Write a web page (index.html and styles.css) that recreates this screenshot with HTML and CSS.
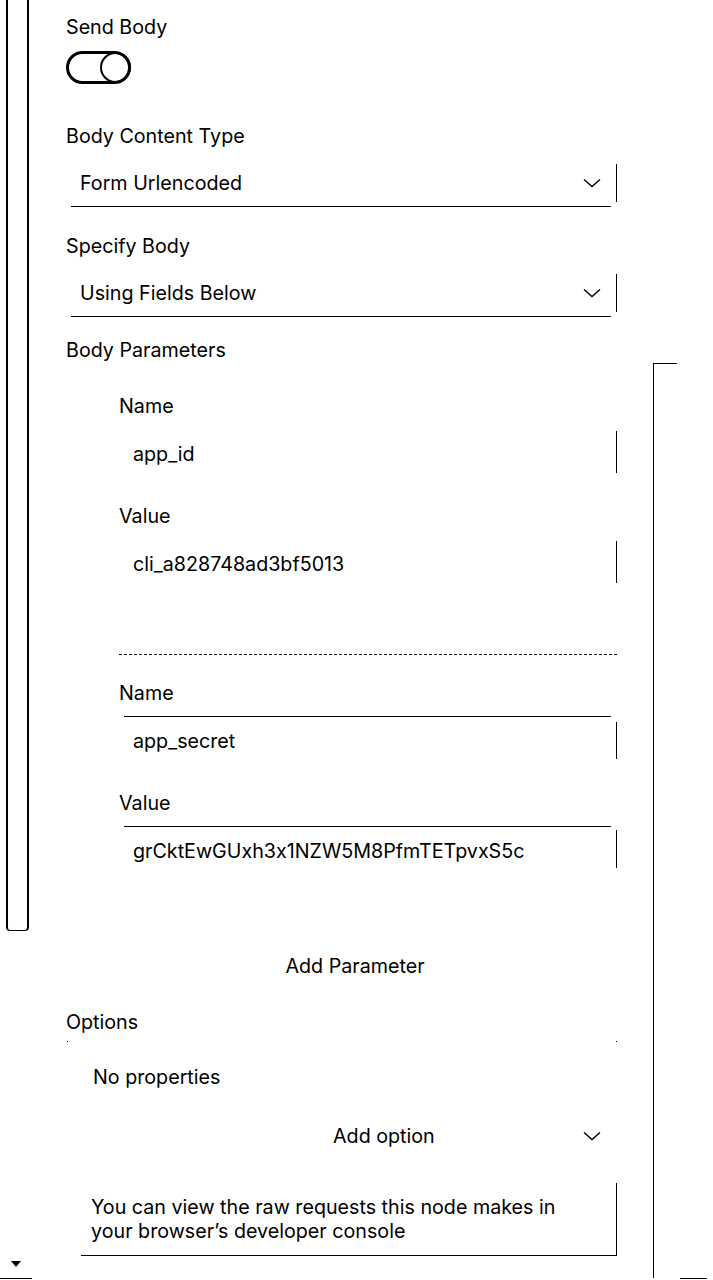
FILE: index.html
```html
<!DOCTYPE html>
<html lang="en">
<head>
<meta charset="utf-8">
<title>HTTP Request</title>
<link rel="stylesheet" href="styles.css">
</head>
<body>
<div class="page">
  <aside class="left-col">
    <div class="rail"></div>
    <div class="left-foot">
      <svg class="tri" width="10" height="6" viewBox="0 0 10 6"><path d="M0 0H10L5 6Z" fill="#000"/></svg>
      <div class="foot-line"></div>
    </div>
  </aside>

  <main class="main">
    <div class="label l-send">Send Body</div>
    <div class="toggle">
      <svg width="66" height="33" viewBox="0 0 66 33">
        <rect x="1.5" y="1.5" width="62" height="30" rx="15" fill="none" stroke="#000" stroke-width="3"/>
        <circle cx="49.5" cy="16.5" r="14.5" fill="none" stroke="#000" stroke-width="2"/>
      </svg>
    </div>

    <div class="label l-ctype">Body Content Type</div>
    <div class="select-row s1">
      <div class="select-field">
        <span>Form Urlencoded</span>
        <svg class="chev" width="18" height="10" viewBox="0 0 18 10"><path d="M1 1.5L9 8.5L17 1.5" fill="none" stroke="#000" stroke-width="1.4"/></svg>
      </div>
      <div class="vline v-select"></div>
    </div>

    <div class="label l-spec">Specify Body</div>
    <div class="select-row s2">
      <div class="select-field">
        <span>Using Fields Below</span>
        <svg class="chev" width="18" height="10" viewBox="0 0 18 10"><path d="M1 1.5L9 8.5L17 1.5" fill="none" stroke="#000" stroke-width="1.4"/></svg>
      </div>
      <div class="vline v-select"></div>
    </div>

    <div class="label l-params">Body Parameters</div>
    <div class="params">
      <div class="param">
        <div class="label p-name1">Name</div>
        <div class="field-row f-a">
          <div class="field plain"><span>app_id</span></div>
          <div class="vline v-field"></div>
        </div>
        <div class="label p-value1">Value</div>
        <div class="field-row f-b">
          <div class="field plain"><span>cli_a828748ad3bf5013</span></div>
          <div class="vline v-field"></div>
        </div>
      </div>
      <div class="divider"></div>
      <div class="param">
        <div class="label p-name2">Name</div>
        <div class="field-row f-c">
          <div class="field topline"><span>app_secret</span></div>
          <div class="vline v-field2"></div>
        </div>
        <div class="label p-value2">Value</div>
        <div class="field-row f-d">
          <div class="field topline"><span>grCktEwGUxh3x1NZW5M8PfmTETpvxS5c</span></div>
          <div class="vline v-field2"></div>
        </div>
      </div>
    </div>

    <div class="add-param">Add Parameter</div>

    <div class="label l-options">Options</div>
    <div class="dots"></div>
    <div class="no-props">No properties</div>
    <div class="add-option">
      <span>Add option</span>
      <svg class="chev" width="18" height="10" viewBox="0 0 18 10"><path d="M1 1.5L9 8.5L17 1.5" fill="none" stroke="#000" stroke-width="1.4"/></svg>
    </div>

    <div class="notice-row">
      <div class="notice">You can view the raw requests this node makes in your browser’s developer console</div>
      <div class="vline v-notice"></div>
    </div>
  </main>

  <aside class="right-col">
    <div class="track"></div>
    <div class="track-foot"></div>
  </aside>
</div>
</body>
</html>
```

FILE: styles.css
```css
* { box-sizing: border-box; }
html, body { margin: 0; padding: 0; background: #fff; }
body {
  font-family: Inter, "Noto Sans", "Liberation Sans", sans-serif;
  font-size: 19.7px;
  font-feature-settings: "calt" 0;
  color: #000;
  width: 713px;
  height: 1280px;
  overflow: hidden;
}
.page {
  display: grid;
  grid-template-columns: 32px 621px 60px;
  height: 1280px;
}

/* left column */
.left-col {
  display: flex;
  flex-direction: column;
  justify-content: space-between;
  height: 1280px;
}
.rail {
  margin-left: 6px;
  width: 23px;
  height: 931px;
  border: 2px solid #000;
  border-top: none;
  border-bottom-width: 1.5px;
  border-radius: 0 0 4px 4px;
}
.left-foot { display: flex; flex-direction: column; }
.tri { display: block; margin-left: 11px; }
.foot-line { margin-top: 11px; height: 1px; width: 32px; background: #000; margin-bottom: 1px; }

/* main */
.main {
  padding-left: 34px;
  padding-top: 15px;
  display: flex;
  flex-direction: column;
  align-items: flex-start;
}
.label { line-height: 24px; height: 24px; white-space: nowrap; }
.toggle { margin-top: 12px; height: 33px; }
.toggle svg { display: block; }
.l-ctype { margin-top: 40px; }
.select-row { display: flex; margin-left: 5px; gap: 5px; }
.s1 { margin-top: 16px; }
.s2 { margin-top: 16px; }
.select-field {
  width: 540px;
  height: 43px;
  border-bottom: 1px solid #000;
  display: flex;
  align-items: center;
  justify-content: space-between;
  padding: 0 10px 5px 9px;
  line-height: 24px;
}
.chev { display: block; }
.vline { width: 1px; background: #000; }
.v-select { height: 38px; }
.l-spec { margin-top: 27px; }
.l-params { margin-top: 21px; }

.params { padding-left: 53px; display: flex; flex-direction: column; }
.param { display: flex; flex-direction: column; }
.p-name1 { margin-top: 32px; }
.field-row { display: flex; gap: 5px; margin-left: 5px; }
.field {
  width: 487px;
  display: flex;
  align-items: center;
  padding-left: 9px;
  line-height: 24px;
  white-space: nowrap;
}
.field.plain { height: 43px; padding-top: 2px; }
.f-a { margin-top: 13px; }
.f-b { margin-top: 13px; }
.v-field { height: 42px; }
.p-value1 { margin-top: 30px; }
.divider {
  margin-top: 70px;
  width: 498px;
  border-top: 1px dashed #000;
}
.p-name2 { margin-top: 26px; }
.f-c, .f-d { margin-top: 11px; }
.field.topline {
  height: 44px;
  border-top: 1px solid #000;
  padding-top: 4px;
}
.v-field2 { height: 37px; margin-top: 6px; }
.f-d .v-field2 { margin-top: 4px; height: 38px; }
.p-value2 { margin-top: 31px; }

.add-param {
  margin-top: 84px;
  align-self: stretch;
  text-align: center;
  width: 578px;
  line-height: 24px;
}
.l-options { margin-top: 32px; }
.dots {
  margin-top: 7px;
  margin-left: 1px;
  width: 550px;
  height: 1px;
  border-left: 1px solid #000;
  border-right: 1px solid #000;
}
.no-props { margin-top: 23px; margin-left: 27px; line-height: 24px; }
.add-option {
  margin-top: 35px;
  width: 545px;
  display: flex;
  align-items: center;
  padding-left: 267px;
  padding-right: 10px;
  line-height: 24px;
}
.add-option .chev { margin-left: auto; }
.notice-row { display: flex; margin-top: 35px; margin-left: 15px; }
.notice {
  width: 535px;
  padding: 12px 40px 12px 10px;
  border-bottom: 1px solid #000;
  line-height: 24px;
}
.v-notice { height: 73px; }

/* right column */
.right-col {
  display: flex;
  flex-direction: column;
  justify-content: space-between;
}
.track {
  margin-top: 363px;
  width: 24px;
  flex: 1;
  border-left: 1px solid #000;
  border-top: 1.5px solid #000;
}
.track-foot {
  margin-left: 27px;
  width: 27px;
  height: 1px;
  background: #000;
  margin-bottom: 1px;
}
```
